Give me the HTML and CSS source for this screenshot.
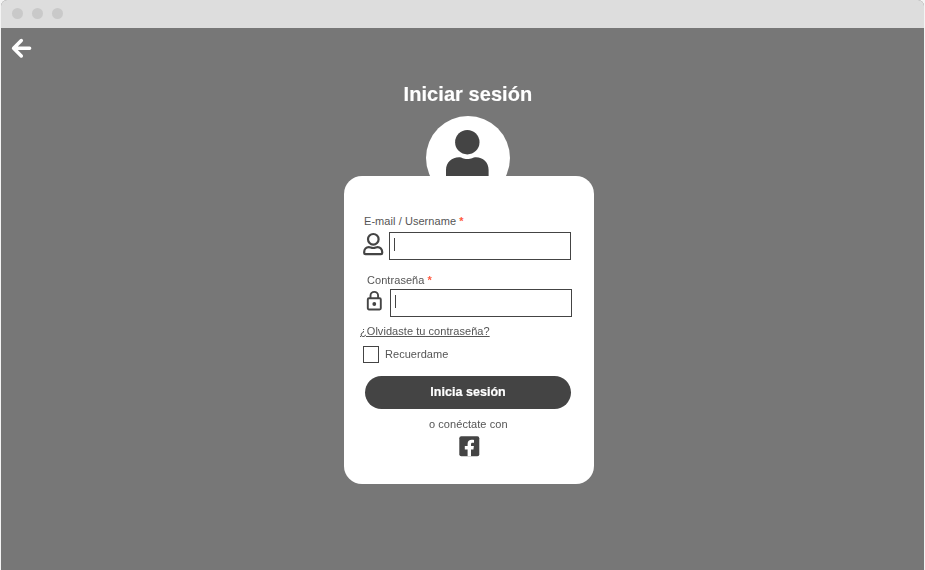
FILE: index.html
```html
<!DOCTYPE html>
<html lang="es">
<head>
<meta charset="utf-8">
<title>Iniciar sesión</title>
<link rel="stylesheet" href="styles.css">
</head>
<body>
<div class="window">
  <header class="titlebar"><i class="dot"></i><i class="dot"></i><i class="dot"></i></header>
  <main class="page">
    <a class="back" aria-label="Volver"><svg width="22" height="22" viewBox="0 0 22 22"><path d="M11.300 3.500 3.600 11.200l7.700 7.700M3.800 11.200H19.600" fill="none" stroke="#fff" stroke-width="3.500" stroke-linecap="round" stroke-linejoin="round"/></svg></a>
    <h1 class="title"><span>Iniciar sesión</span></h1>
    <div class="avatar"><svg width="84" height="60" viewBox="0 0 84 60"><circle cx="42" cy="42" r="42" fill="#fff"/><circle cx="41.300" cy="26.200" r="12.200" fill="#444"/><path d="M20 60V54C20 46 26 41.200 33 41.200C36 41.200 37 43 41.300 43S47 41.200 50 41.200C57 41.200 62.600 46 62.600 54V60Z" fill="#444"/></svg></div>
    <form class="card">
      <label class="label label-user">E-mail / Username <b>*</b></label>
      <div class="field field-user">
        <svg class="user-icon" width="22" height="24" viewBox="0 0 22 24"><g fill="none" stroke="#444" stroke-width="2.200"><circle cx="11.300" cy="7.300" r="5.300"/><path d="M3.500 22.200H19C20 22.200 20.200 21.700 20.200 21V20C20.200 17.200 18.200 15.200 15.600 15.200C14 15.200 13.400 16 11.200 16S8.400 15.200 6.800 15.200C4.200 15.200 2.200 17.200 2.200 20V21C2.200 21.700 2.500 22.200 3.500 22.200Z"/></g></svg>
        <div class="input"><i class="caret"></i></div>
      </div>
      <label class="label label-pass">Contraseña <b>*</b></label>
      <div class="field field-pass">
        <svg class="lock-icon" width="18" height="22" viewBox="0 0 18 22"><g fill="none" stroke="#444" stroke-width="1.900"><rect x="1.800" y="9.300" width="13" height="11.200" rx="1.200"/><path d="M4.500 9.300V6.700A3.800 3.800 0 0 1 12.100 6.700V9.300"/></g><circle cx="8.300" cy="15" r="1.900" fill="#444"/></svg>
        <div class="input"><i class="caret"></i></div>
      </div>
      <a class="forgot">¿Olvidaste tu contraseña?</a>
      <div class="remember"><i class="box"></i><span>Recuerdame</span></div>
      <div class="submit"><span>Inicia sesión</span></div>
      <p class="connect">o conéctate con</p>
      <svg class="facebook" width="21" height="21" viewBox="0 0 21 21"><rect x=".300" y=".300" width="20" height="20" rx="2" fill="#444"/><path d="M8.600 20.300V13.400H5.800V10.100H8.600V7.900C8.600 5 10.300 3.700 12.700 3.700C13.900 3.700 15 3.900 15 3.900V6.700H13.600C12.300 6.700 12 7.400 12 8.200V10.100H14.900L14.400 13.400H12V20.300Z" fill="#fff"/></svg>
    </form>
  </main>
</div>
</body>
</html>
```
FILE: styles.css
```css
* { box-sizing: border-box; }
body { margin: 0; background: #f4f4f4; font-family: "Liberation Sans", Arial, sans-serif; color: #555; overflow: hidden; }
svg { display: block; flex: none; }
.window { width: 923px; height: 570px; margin-left: 1px; background: #777; border-radius: 6px 6px 0 0; overflow: hidden; will-change: opacity; }
.titlebar { height: 28px; padding: 0 11px 1px; display: flex; align-items: center; gap: 9px; background: #ddd; }
.dot { width: 11px; height: 11px; border-radius: 50%; background: #c9c9c9; }
.page { height: 542px; display: flex; flex-direction: column; }
.back { height: 40px; padding: 9px 0 0 9px; }
.title { margin: 13px 0 0 402.600px; height: 35px; font-size: 20px; line-height: 26px; letter-spacing: .06px; color: #fff; -webkit-text-stroke: .15px #fff; white-space: nowrap; }
.avatar { height: 60px; margin-left: 425px; }
.card { width: 250px; height: 308px; margin-left: 343px; display: flex; flex-direction: column; background: #fff; border-radius: 18px; }
.label { font-size: 11px; line-height: 13px; height: 13px; letter-spacing: .06px; white-space: nowrap; }
.label b { color: #ff5a40; }
.label-user { margin: 39px 0 0 20px; }
.field { display: flex; height: 28px; }
.field-user { margin: 4px 0 0 18px; }
.user-icon { margin-right: 5px; }
.input { width: 182px; height: 28px; border: 1px solid #444; padding: 5px 0 0 4px; }
.caret { display: block; width: 1px; height: 13px; background: #444; }
.label-pass { margin: 14px 0 0 23px; }
.field-pass { margin: 2px 0 0 22px; }
.lock-icon { margin-right: 6px; }
.forgot { margin: 8px 0 0 16px; font-size: 11px; line-height: 13px; letter-spacing: .05px; text-decoration: underline; white-space: nowrap; }
.remember { display: flex; align-items: center; height: 17px; margin: 8px 0 0 19px; font-size: 11px; line-height: 13px; }
.remember span { margin-bottom: 1px; letter-spacing: .04px; }
.box { width: 16px; height: 17px; border: 1px solid #444; margin-right: 6px; }
.submit { width: 206px; height: 33px; padding-bottom: 2px; margin: 13px 0 0 21px; display: flex; align-items: center; justify-content: center; border-radius: 17px; background: #444; color: #fff; font-size: 12.500px; letter-spacing: .04px; font-weight: bold; -webkit-text-stroke: .2px #fff; }
.connect { margin: 9px 0 0 85px; font-size: 11px; line-height: 13px; letter-spacing: .06px; white-space: nowrap; }
.facebook { margin: 5px 0 0 115px; }
```
